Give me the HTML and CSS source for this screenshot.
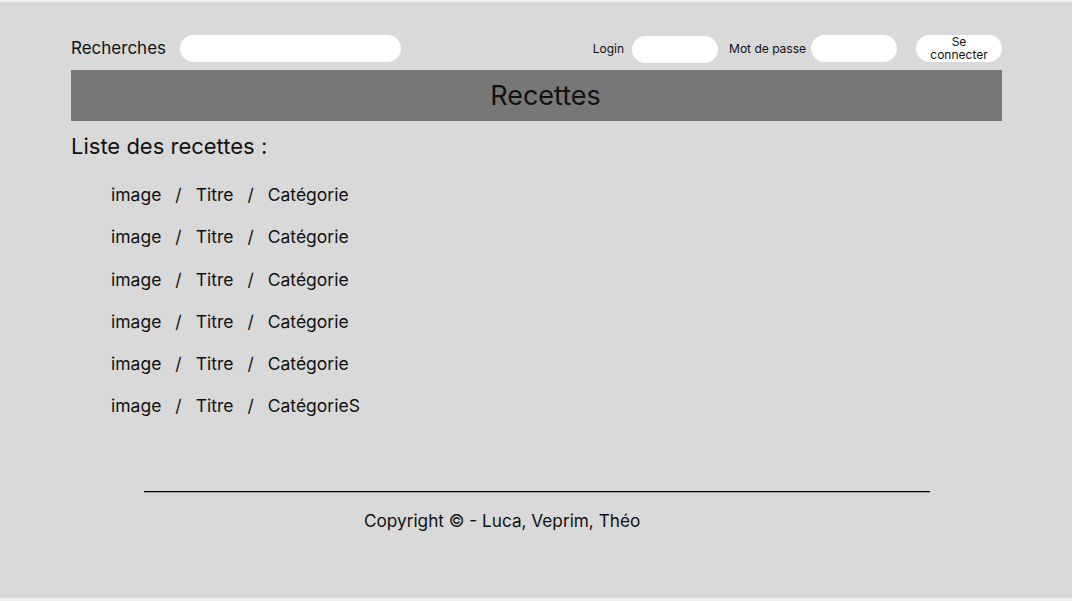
FILE: index.html
```html
<!DOCTYPE html>
<html lang="fr">
<head>
<meta charset="utf-8">
<title>Recettes</title>
<link rel="stylesheet" href="styles.css">
</head>
<body>
<div class="frame">
  <header class="topbar">
    <div class="search">
      <span class="search-label">Recherches</span>
      <span class="field field-search"></span>
    </div>
    <div class="auth">
      <span class="auth-label">Login</span>
      <span class="field field-small login-field"></span>
      <span class="auth-label pass-label">Mot de passe</span>
      <span class="field field-small pass-field"></span>
      <button class="btn-connect">Se<br>connecter</button>
    </div>
  </header>
  <div class="title-bar">Recettes</div>
  <h2 class="list-title">Liste des recettes :</h2>
  <ul class="recipes">
    <li><span>image</span><span>/</span><span>Titre</span><span>/</span><span>Catégorie</span></li>
    <li><span>image</span><span>/</span><span>Titre</span><span>/</span><span>Catégorie</span></li>
    <li><span>image</span><span>/</span><span>Titre</span><span>/</span><span>Catégorie</span></li>
    <li><span>image</span><span>/</span><span>Titre</span><span>/</span><span>Catégorie</span></li>
    <li><span>image</span><span>/</span><span>Titre</span><span>/</span><span>Catégorie</span></li>
    <li><span>image</span><span>/</span><span>Titre</span><span>/</span><span>CatégorieS</span></li>
  </ul>
  <footer class="footer">
    <div class="rule"></div>
    <p class="copyright">Copyright © - Luca, Veprim, Théo</p>
  </footer>
</div>
</body>
</html>
```
FILE: styles.css
```css
* { box-sizing: border-box; }
html, body { margin: 0; padding: 0; }
body {
  background: #efefef;
  padding-top: 2px;
  font-family: Inter, "Noto Sans", sans-serif;
  color: #111;
}
.frame {
  height: 596px;
  background: #d9d9d9;
  padding: 32px 70px 0 71px;
}
.topbar {
  display: flex;
  justify-content: space-between;
  align-items: center;
  height: 28px;
}
.search { display: flex; align-items: center; }
.search-label { font-size: 17px; margin-right: 14px; }
.field {
  display: block;
  background: #fff;
  border-radius: 14px;
  height: 27px;
}
.field-search { width: 221px; }
.auth { display: flex; align-items: center; }
.auth-label { font-size: 12px; }
.field-small { width: 86px; }
.login-field { margin-left: 8px; margin-top: 2px; }
.pass-label { margin-left: 11px; }
.pass-field { margin-left: 5px; }
.btn-connect {
  margin-left: 19px;
  width: 86px;
  height: 27px;
  border: 0;
  border-radius: 14px;
  background: #fff;
  font-family: inherit;
  font-size: 12px;
  line-height: 13px;
  color: #111;
  padding: 0;
}
.title-bar {
  margin-top: 8px;
  height: 51px;
  background: #777777;
  text-align: center;
  padding-left: 18px;
  font-size: 27px;
  line-height: 51px;
  color: #111;
}
.list-title {
  margin: 11px 0 0;
  font-size: 22px;
  font-weight: 400;
  line-height: 28px;
}
.recipes {
  list-style: none;
  margin: 24px 0 0;
  padding: 0 0 0 40px;
}
.recipes li {
  display: flex;
  gap: 14px;
  font-size: 17.5px;
  height: 42.3px;
  line-height: 22px;
}
.footer { margin-top: 53px; }
.rule {
  margin-left: 73px;
  width: 786px;
  height: 1px;
  background: #000;
  box-shadow: 0 0.5px 0 rgba(0,0,0,0.5);
}
.copyright {
  margin: 18px 0 0 293px;
  font-size: 17.2px;
  line-height: 22px;
}
```
